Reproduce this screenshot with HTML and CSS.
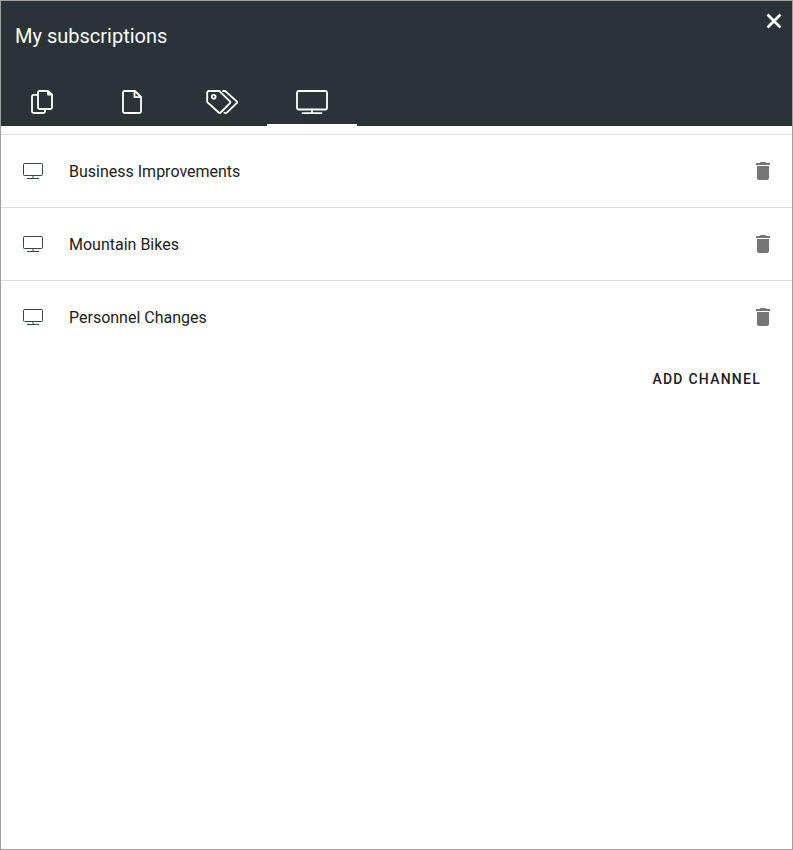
FILE: index.html
```html
<!DOCTYPE html>
<html lang="en">
<head>
<meta charset="utf-8">
<title>My subscriptions</title>
<link rel="stylesheet" href="styles.css">
</head>
<body>
<svg class="symbols" width="0" height="0" aria-hidden="true">
  <symbol id="trash" viewBox="0 0 24 24"><path d="M6 19c0 1.100.9 2 2 2h8c1.100 0 2-.9 2-2V7H6v12zM19 4h-3.500l-1-1h-5l-1 1H5v2h14V4z"/></symbol>
  <symbol id="channel" viewBox="0 0 22 18"><rect x="1.500" y="1.500" width="19" height="12" rx=".8"/><path d="M11 14v2.500M5.500 16.500h11"/></symbol>
</svg>
<main class="dialog">
  <header class="header">
    <div class="titlebar">
      <h1 class="title">My subscriptions</h1>
      <button class="close" aria-label="Close"><svg width="16" height="16" viewBox="0 0 16 16"><path d="M1.500 1.500l13 13M14.500 1.500l-13 13"/></svg></button>
    </div>
    <nav class="tabs">
      <button class="tab" aria-label="Documents"><svg width="24" height="26" viewBox="0 0 24 26"><path d="M7.500 5.800H3.500a1.500 1.500 0 0 0-1.500 1.500v15.200a1.500 1.500 0 0 0 1.500 1.500h10a1.500 1.500 0 0 0 1.500-1.500V20.500M18 2H9.500A1.500 1.500 0 0 0 8 3.500v15A1.500 1.500 0 0 0 9.500 20h11a1.500 1.500 0 0 0 1.500-1.500V5.500zM18 2v3.500h4"/></svg></button>
      <button class="tab" aria-label="Pages"><svg width="24" height="26" viewBox="0 0 24 26"><path d="M15 2H4.500A1.500 1.500 0 0 0 3 3.500v19A1.500 1.500 0 0 0 4.500 24h15a1.500 1.500 0 0 0 1.500-1.500V8zM14.500 2.500v5.700h6.200"/></svg></button>
      <button class="tab" aria-label="Tags"><svg width="34" height="26" viewBox="0 0 34 26"><path d="M3.700 2h10.600L25 12.300a1.300 1.300 0 0 1 0 1.800L15.700 23.500a1.400 1.400 0 0 1-2 0L2.200 13V3.500a1.500 1.500 0 0 1 1.500-1.500zM18 2h2.200L31.700 12.300a1.300 1.300 0 0 1 0 1.800L22 23.500a1.800 1.800 0 0 1-2.500.2"/><circle cx="8.700" cy="7.700" r="1.900"/></svg></button>
      <button class="tab tab-active" aria-label="Channels"><svg width="34" height="26" viewBox="0 0 34 26"><rect x="2" y="2" width="30" height="18.500" rx="1.700"/><path d="M17 20.500v3.500M7.500 24.200h19"/></svg></button>
    </nav>
  </header>
  <ul class="list">
    <li class="row"><svg class="channel"><use href="#channel"/></svg><span class="name">Business Improvements</span><button class="delete" aria-label="Delete"><svg><use href="#trash"/></svg></button></li>
    <li class="row"><svg class="channel"><use href="#channel"/></svg><span class="name">Mountain Bikes</span><button class="delete" aria-label="Delete"><svg><use href="#trash"/></svg></button></li>
    <li class="row"><svg class="channel"><use href="#channel"/></svg><span class="name">Personnel Changes</span><button class="delete" aria-label="Delete"><svg><use href="#trash"/></svg></button></li>
  </ul>
  <div class="actions"><button class="add">ADD CHANNEL</button></div>
</main>
</body>
</html>
```
FILE: styles.css
```css
* { box-sizing: border-box; }
body { margin: 0; font-family: Roboto, sans-serif; color: #212121; }
button { padding: 0; border: 0; background: none; font: inherit; color: inherit; }
svg { display: block; }
.symbols { position: absolute; }
.dialog { height: 850px; border: 1px solid #a0a0a0; background: #fff; overflow: hidden; }
.header { height: 125px; background: #2a3338; color: #fff; }
.titlebar { display: flex; justify-content: space-between; align-items: flex-start; height: 77px; padding-left: 14px; }
.title { margin: 23px 0 0; font-size: 20px; line-height: 24px; font-weight: 400; }
.close { margin: 12px 10px 0 0; }
.close svg { fill: none; stroke: #fff; stroke-width: 2.8; }
.tabs { display: flex; height: 48px; margin-left: -4px; }
.tab { display: flex; justify-content: center; align-items: center; width: 90px; border-bottom: 2px solid transparent; }
.tab svg { margin-top: 2px; fill: none; stroke: #fff; stroke-width: 1.8; stroke-linejoin: round; stroke-linecap: round; }
.tab-active { border-bottom-color: #fff; }
.list { margin: 8px 0 0; padding: 0; list-style: none; }
.row { display: flex; align-items: center; height: 73px; padding: 0 17px 0 21px; border-top: 1px solid #dedede; }
.channel { width: 22px; height: 18px; fill: none; stroke: #3b444b; stroke-width: 1; stroke-linecap: round; }
.name { flex: 1; margin: 2px 0 0 25px; font-size: 16px; line-height: 24px; }
.delete svg { width: 24px; height: 24px; fill: #757575; }
.actions { display: flex; justify-content: flex-end; padding: 8px 31px 0 0; }
.add { height: 36px; font-size: 14px; font-weight: 500; letter-spacing: 1.25px; }
```
